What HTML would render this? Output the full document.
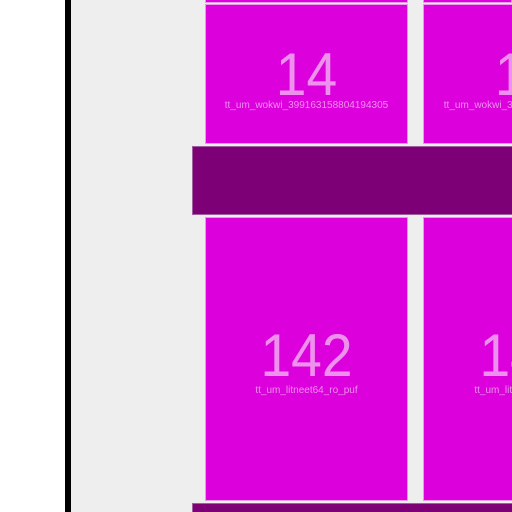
<!DOCTYPE html><html style="overflow:hidden"><head><style>
html,body{margin:0;width:512px;height:512px;overflow:hidden}
#w{position:relative;width:512px;height:512px;overflow:hidden;background:#fff;font-family:"Liberation Sans",sans-serif}
.g{position:absolute;left:71px;top:0;width:441px;height:512px;background:#eee}
.b{position:absolute;left:65px;top:0;width:6px;height:512px;background:#000}
.t{position:absolute;background:#dc00dc;border:1px solid #e79be7;box-sizing:border-box;color:#ee90ee;text-align:center;overflow:hidden}
.d{position:absolute;background:#7e0077;border:1px solid #a060a0;box-sizing:border-box}
.n{position:absolute;left:0;right:0;font-size:60px;line-height:60px;transform:scaleX(0.92)}
.l{position:absolute;left:0;right:0;font-size:10px;line-height:12px}
</style></head><body><div id="w">
<div class="g"></div><div class="b"></div>
<div class="t" style="left:205px;top:-10px;width:203px;height:13px"></div>
<div class="t" style="left:423px;top:-10px;width:89px;height:13px"></div>
<div class="t" style="left:205px;top:4px;width:203px;height:140px"><div class="n" style="top:40px">14</div><div class="l" style="top:95px">tt_um_wokwi_399163158804194305</div></div>
<div class="t" style="left:423px;top:4px;width:89px;height:140px;border-right:none"><div style="position:absolute;left:0;top:0;width:203px;height:140px"><div class="n" style="top:40px">14</div><div class="l" style="top:95px">tt_um_wokwi_399163158804194305</div></div></div>
<div class="d" style="left:192px;top:146px;width:320px;height:69px;border-right:none"></div>
<div class="t" style="left:205px;top:217px;width:203px;height:284px"><div class="n" style="top:108px">142</div><div class="l" style="top:167px">tt_um_litneet64_ro_puf</div></div>
<div class="t" style="left:423px;top:217px;width:89px;height:284px;border-right:none"><div style="position:absolute;left:0;top:0;width:203px;height:284px"><div class="n" style="top:108px">143</div><div class="l" style="top:167px">tt_um_litneet64_ro_puf</div></div></div>
<div class="d" style="left:192px;top:503px;width:320px;height:9px;border-right:none;border-bottom:none"></div>
</div></body></html>
